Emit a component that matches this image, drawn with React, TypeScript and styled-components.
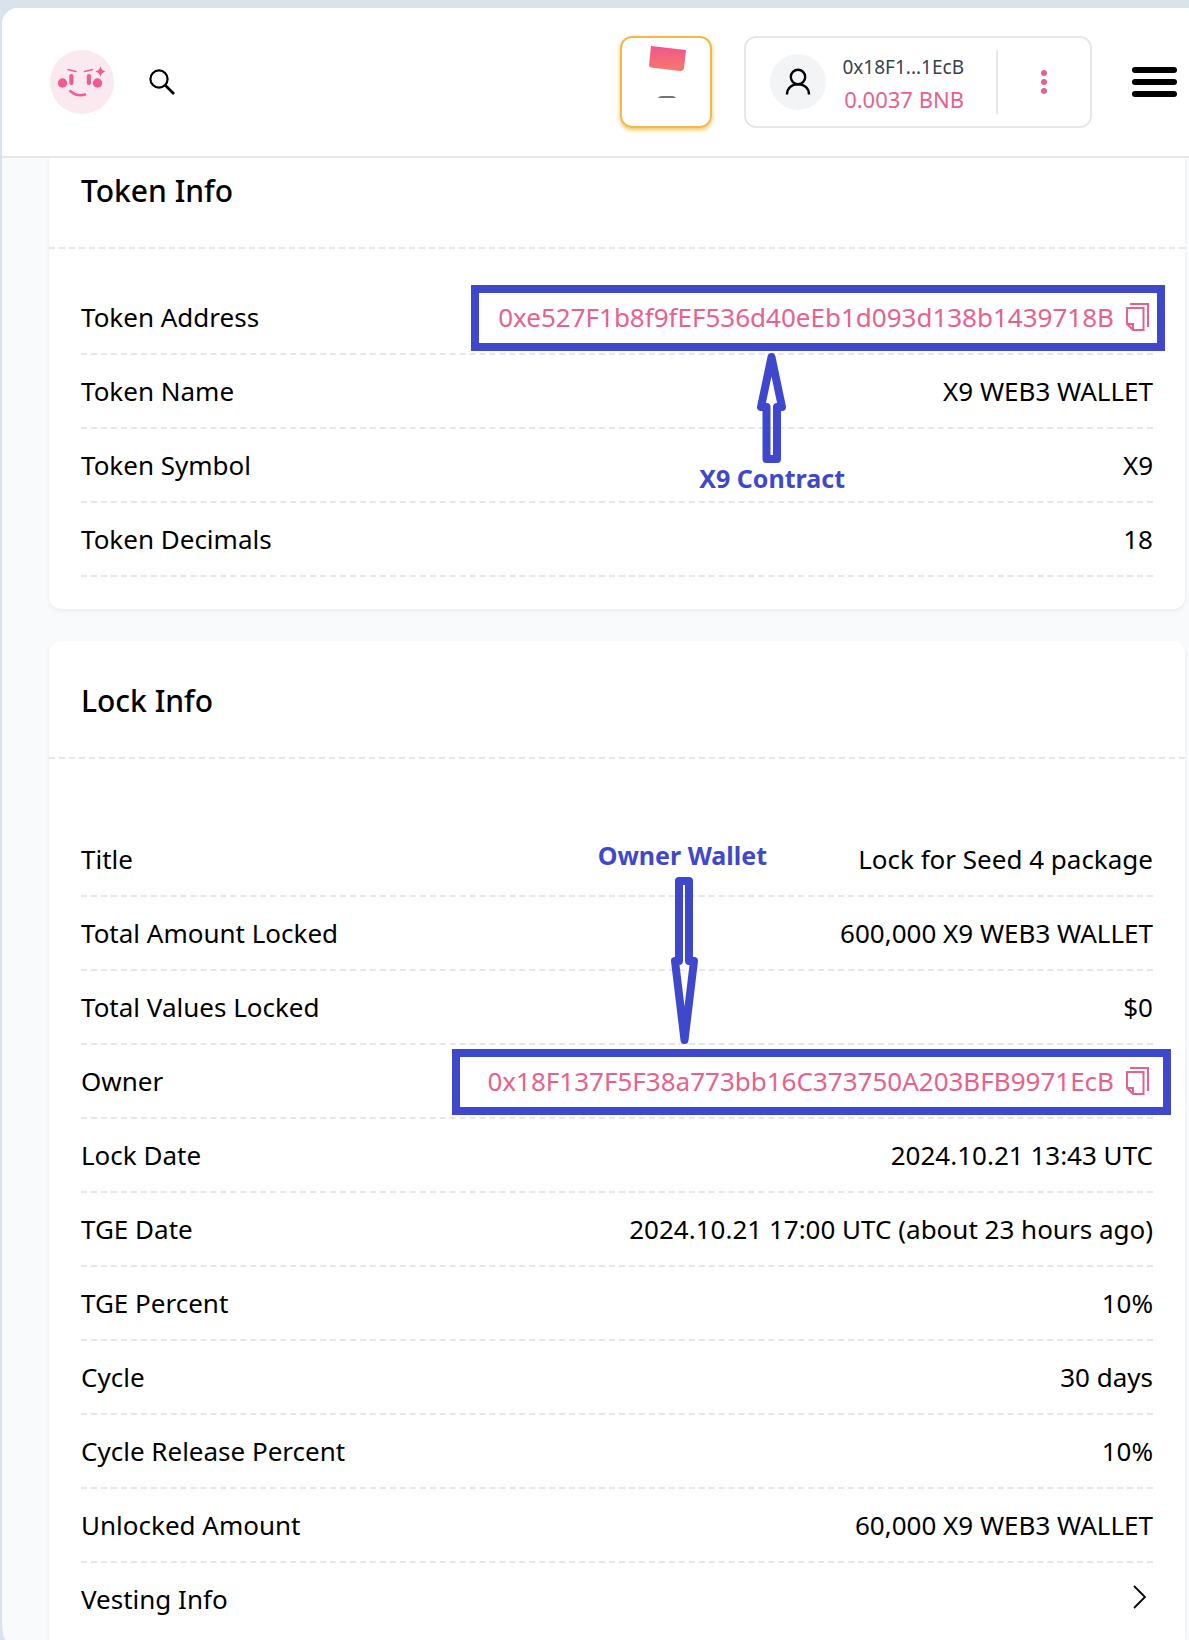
import React from "react";
import styled, { createGlobalStyle } from "styled-components";

const pink = "#e8618c";
const ink = "#3f48cc";
const line = "#e5e7eb";

const GlobalStyle = createGlobalStyle`
  *, *::before, *::after { box-sizing: border-box; }
  body {
    margin: 0;
    background: #dae2eb;
    color: #000;
    font-family: "Noto Sans", "Open Sans", sans-serif;
    font-size: 26px;
    line-height: 36px;
  }
  button {
    font: inherit;
    color: inherit;
    background: none;
    border: 0;
    padding: 0;
    cursor: pointer;
  }
  svg { display: block; flex: none; }
`;

const Page = styled.div`
  padding: 8px 0 0 2px;
`;

const Frame = styled.div`
  display: flex;
  flex-direction: column;
  min-height: calc(100vh - 8px);
  background: #f8fafc;
  border-top-left-radius: 16px;
  border-bottom-left-radius: 4px 18px;
  overflow: hidden;
`;

const Header = styled.header`
  position: relative;
  z-index: 2;
  display: flex;
  align-items: center;
  height: 150px;
  padding: 0 12px 0 48px;
  background: #fff;
  border-bottom: 2px solid ${line};
`;

const LogoLink = styled.a`
  display: block;
  margin-right: 28px;
`;

const IconButton = styled.button`
  display: grid;
  place-items: center;
  min-width: 40px;
  height: 40px;
`;

const HeaderActions = styled.div`
  display: flex;
  align-items: center;
  margin-left: auto;
`;

const NetworkButton = styled.button`
  display: grid;
  place-items: center;
  width: 92px;
  height: 92px;
  margin-right: 32px;
  border: 2px solid #f0b94a;
  border-radius: 12px;
  box-shadow: 0 2px 4px #f5c35c;
`;

const WalletBox = styled.div`
  display: flex;
  align-items: center;
  width: 348px;
  height: 92px;
  margin-right: 40px;
  padding-left: 24px;
  border: 2px solid ${line};
  border-radius: 12px;
`;

const Avatar = styled.span`
  display: grid;
  place-items: center;
  width: 56px;
  height: 56px;
  border-radius: 50%;
  background: #f3f4f6;
`;

const WalletText = styled.div`
  display: flex;
  flex: 1;
  flex-direction: column;
  align-items: flex-end;
  padding: 4px 32px 0 0;
  white-space: nowrap;
`;

const WalletAddress = styled.span`
  color: #374151;
  font-size: 19px;
  line-height: 30px;
`;

const WalletBalance = styled.span`
  color: ${pink};
  font-size: 22px;
  line-height: 34px;
`;

const WalletMenu = styled.button`
  display: grid;
  place-items: center;
  width: 94px;
  height: 64px;
  border-left: 2px solid ${line};
`;

const Main = styled.main`
  display: flex;
  flex: 1;
  flex-direction: column;
  gap: 32px;
  margin-top: -27px;
  padding: 0 4px 0 47px;
`;

const Card = styled.section<{ $fill?: boolean }>`
  flex: ${(p) => (p.$fill ? "1" : "none")};
  background: #fff;
  border-radius: ${(p) => (p.$fill ? "12px 12px 0 0" : "12px")};
  box-shadow: 0 2px 4px rgba(15, 23, 42, 0.06);
`;

const CardTitle = styled.h2`
  display: flex;
  align-items: center;
  height: 118px;
  margin: 0;
  padding: 4px 32px 0;
  border-bottom: 2px dashed ${line};
  font-size: 30px;
  font-weight: 500;
  line-height: 40px;
`;

const Rows = styled.dl<{ $top: number; $bottom: number }>`
  margin: 0;
  padding: ${(p) => p.$top}px 32px ${(p) => p.$bottom}px;
`;

const Row = styled.div<{ $last?: boolean }>`
  position: relative;
  display: flex;
  align-items: center;
  justify-content: space-between;
  height: 74px;
  border-bottom: 2px dashed ${(p) => (p.$last ? "transparent" : line)};
`;

const Term = styled.dt`
  white-space: nowrap;
`;

const Value = styled.dd`
  margin: 0;
  white-space: nowrap;
`;

const Address = styled.span`
  display: flex;
  align-items: center;
  gap: 12px;
  padding-right: 4px;
`;

const AddressLink = styled.a`
  color: ${pink};
  text-decoration: none;
`;

const Highlight = styled.span<{ $width: number; $right: number }>`
  position: absolute;
  top: 4px;
  right: ${(p) => -p.$right}px;
  width: ${(p) => p.$width}px;
  height: 66px;
  border: 8px solid ${ink};
  pointer-events: none;
`;

const Callout = styled.span<{ $side: "above" | "below"; $right: number }>`
  position: absolute;
  z-index: 1;
  ${(p) => (p.$side === "above" ? "bottom: 72px;" : "top: 72px;")}
  right: ${(p) => p.$right}px;
  display: flex;
  flex-direction: column;
  align-items: center;
  gap: ${(p) => (p.$side === "above" ? 8 : 0)}px;
  color: ${ink};
  font-size: 25px;
  font-weight: 700;
  line-height: 28px;
  white-space: nowrap;
  pointer-events: none;
`;

const LogoIcon = () => (
  <svg width="64" height="64" viewBox="0 0 64 64" aria-hidden="true">
    <circle cx="32" cy="32" r="32" fill="#fbe9f0" />
    <g fill="#f05b93">
      <circle cx="12.5" cy="33" r="4.7" />
      <circle cx="47.5" cy="33" r="4.7" />
      <rect x="19.3" y="24" width="4.2" height="11" rx="2.1" />
      <rect x="36.8" y="24" width="4.2" height="11" rx="2.1" />
      <path d="M50.5 16Q51.3 20.7 55.5 21.5Q51.3 22.3 50.5 27Q49.7 22.3 45.2 21.5Q49.7 20.7 50.5 16Z" />
    </g>
    <g fill="none" stroke="#f05b93" strokeLinecap="round">
      <path d="M18 19.5L26 21.5M34.5 21.5L42.5 19.5" strokeWidth="1.4" />
      <path d="M20.3 41Q27 47 35 44.5" strokeWidth="2.4" />
    </g>
  </svg>
);

const SearchIcon = () => (
  <svg width="26" height="26" viewBox="0 0 26 26" fill="none" stroke="#000" aria-hidden="true">
    <circle cx="10" cy="10" r="8.6" strokeWidth="2.2" />
    <path d="M16 16L25 25" strokeWidth="2.6" />
  </svg>
);

const NetworkIcon = () => (
  <svg width="88" height="88" viewBox="0 0 88 88" aria-hidden="true">
    <defs>
      <linearGradient id="flag" x1="0" y1="0" x2="0" y2="1">
        <stop offset="0" stopColor="#ef568c" />
        <stop offset="1" stopColor="#f9796d" />
      </linearGradient>
    </defs>
    <path d="M29 8L64 12L62 30Q61 33.5 58 33L29 29.5Q27 29 27 27Z" fill="url(#flag)" />
    <path d="M36 60Q37 58 40 58H50Q53 58 54 60Z" fill="#6f7475" />
  </svg>
);

const UserIcon = () => (
  <svg width="26" height="28" viewBox="0 0 26 28" fill="none" stroke="#000" strokeWidth="2.4" aria-hidden="true">
    <circle cx="13" cy="9" r="7.2" />
    <path d="M2 26.5C2 20 7 16.3 13 16.3S24 20 24 26.5" />
  </svg>
);

const DotsIcon = () => (
  <svg width="8" height="26" viewBox="0 0 8 26" fill={pink} aria-hidden="true">
    <circle cx="4" cy="4" r="3" />
    <circle cx="4" cy="13" r="3" />
    <circle cx="4" cy="22" r="3" />
  </svg>
);

const MenuIcon = () => (
  <svg width="45" height="32" viewBox="0 0 45 32" aria-hidden="true">
    <rect y="1" width="45" height="6" rx="3" />
    <rect y="13" width="45" height="6" rx="3" />
    <rect y="25" width="45" height="6" rx="3" />
  </svg>
);

const CopyIcon = () => (
  <svg width="23" height="28" viewBox="0 0 23 28" fill="none" stroke={pink} strokeWidth="2" aria-hidden="true">
    <path d="M4 1H22V24" />
    <path d="M1 5H17.5V27H7L1 21Z" />
    <path d="M1 21H7V27" />
  </svg>
);

const ChevronIcon = () => (
  <svg width="20" height="24" viewBox="0 0 20 24" fill="none" stroke="#000" strokeWidth="1.8" aria-hidden="true">
    <path d="M1 1L12 12L1 23" />
  </svg>
);

const ArrowUp = () => (
  <svg width="30" height="111" viewBox="0 0 30 111" fill="none" stroke={ink} strokeWidth="8" strokeLinejoin="round" aria-hidden="true">
    <path d="M14.5 4L4 54H9.5V106H20V54H25Z" />
  </svg>
);

const ArrowDown = () => (
  <svg width="28" height="168" viewBox="0 0 28 168" overflow="visible" fill="none" stroke={ink} strokeWidth="8" strokeLinejoin="round" aria-hidden="true">
    <path d="M11 4H21V84H26L16.5 163L7 84H11Z" />
  </svg>
);

const AddressValue = ({ text }: { text: string }) => (
  <Address>
    <AddressLink href="#">{text}</AddressLink>
    <button type="button" aria-label="Copy address">
      <CopyIcon />
    </button>
  </Address>
);

type RowData = {
  label: string;
  value: React.ReactNode;
  note?: React.ReactNode;
  last?: boolean;
};

const tokenRows: RowData[] = [
  {
    label: "Token Address",
    value: <AddressValue text="0xe527F1b8f9fEF536d40eEb1d093d138b1439718B" />,
    note: (
      <>
        <Highlight $width={694} $right={12} />
        <Callout $side="below" $right={308}>
          <ArrowUp />
          X9 Contract
        </Callout>
      </>
    ),
  },
  { label: "Token Name", value: "X9 WEB3 WALLET" },
  { label: "Token Symbol", value: "X9" },
  { label: "Token Decimals", value: "18" },
];

const lockRows: RowData[] = [
  { label: "Title", value: "Lock for Seed 4 package" },
  { label: "Total Amount Locked", value: "600,000 X9 WEB3 WALLET" },
  { label: "Total Values Locked", value: "$0" },
  {
    label: "Owner",
    value: <AddressValue text="0x18F137F5F38a773bb16C373750A203BFB9971EcB" />,
    note: (
      <>
        <Highlight $width={719} $right={18} />
        <Callout $side="above" $right={386}>
          Owner Wallet
          <ArrowDown />
        </Callout>
      </>
    ),
  },
  { label: "Lock Date", value: "2024.10.21 13:43 UTC" },
  { label: "TGE Date", value: "2024.10.21 17:00 UTC (about 23 hours ago)" },
  { label: "TGE Percent", value: "10%" },
  { label: "Cycle", value: "30 days" },
  { label: "Cycle Release Percent", value: "10%" },
  { label: "Unlocked Amount", value: "60,000 X9 WEB3 WALLET" },
  {
    label: "Vesting Info",
    value: (
      <button type="button" aria-label="Show vesting info">
        <ChevronIcon />
      </button>
    ),
    last: true,
  },
];

const InfoRows = ({ rows, top, bottom }: { rows: RowData[]; top: number; bottom: number }) => (
  <Rows $top={top} $bottom={bottom}>
    {rows.map((row) => (
      <Row key={row.label} $last={row.last}>
        <Term>{row.label}</Term>
        <Value>
          {row.value}
          {row.note}
        </Value>
      </Row>
    ))}
  </Rows>
);

export default function App() {
  return (
    <Page>
      <GlobalStyle />
      <Frame>
        <Header>
          <LogoLink href="#" aria-label="Home">
            <LogoIcon />
          </LogoLink>
          <IconButton type="button" aria-label="Search">
            <SearchIcon />
          </IconButton>
          <HeaderActions>
            <NetworkButton type="button" aria-label="Network">
              <NetworkIcon />
            </NetworkButton>
            <WalletBox>
              <Avatar>
                <UserIcon />
              </Avatar>
              <WalletText>
                <WalletAddress>0x18F1...1EcB</WalletAddress>
                <WalletBalance>0.0037 BNB</WalletBalance>
              </WalletText>
              <WalletMenu type="button" aria-label="Wallet options">
                <DotsIcon />
              </WalletMenu>
            </WalletBox>
            <IconButton type="button" aria-label="Menu">
              <MenuIcon />
            </IconButton>
          </HeaderActions>
        </Header>
        <Main>
          <Card>
            <CardTitle>Token Info</CardTitle>
            <InfoRows rows={tokenRows} top={32} bottom={32} />
          </Card>
          <Card $fill>
            <CardTitle>Lock Info</CardTitle>
            <InfoRows rows={lockRows} top={64} bottom={0} />
          </Card>
        </Main>
      </Frame>
    </Page>
  );
}
